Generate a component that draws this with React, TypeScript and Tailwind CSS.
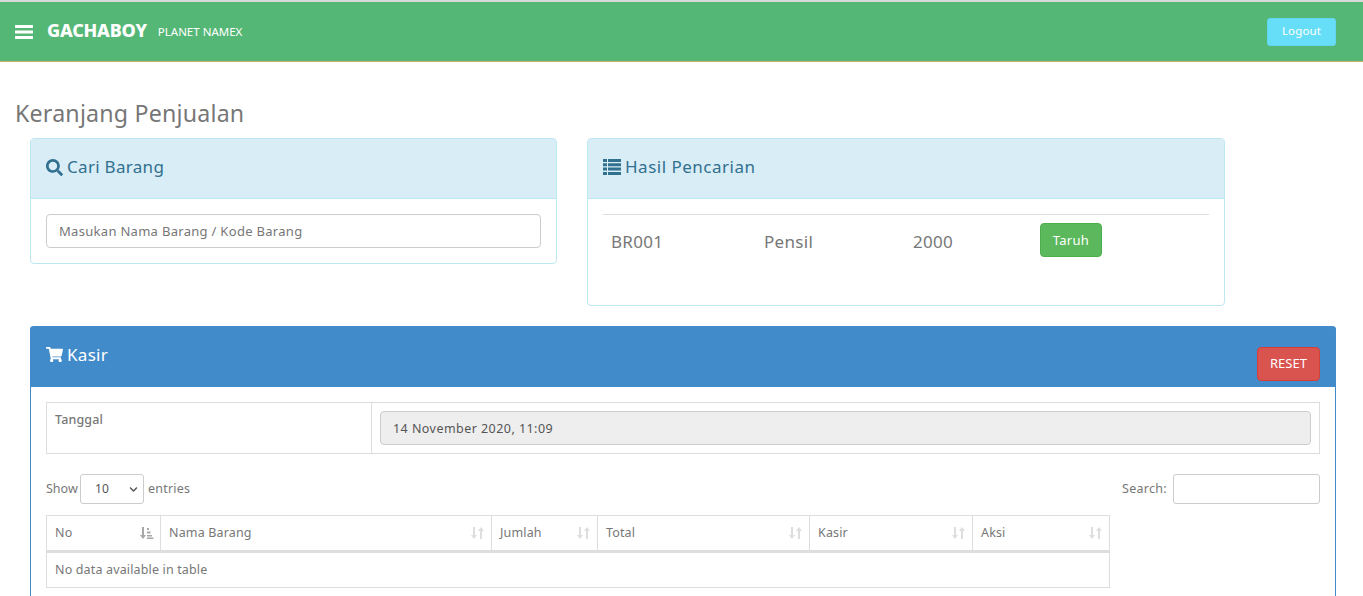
import React from 'react';
import { FaSearch, FaShoppingCart, FaChevronDown } from 'react-icons/fa';

const font = { fontFamily: '"Noto Sans", sans-serif' };

const SortIcon = ({ active = false }: { active?: boolean }) => (
  <svg width="14" height="14" viewBox="0 0 14 14" className={active ? 'text-[#a8a8a8]' : 'text-[#dedede]'} fill="currentColor">
    <path d="M2 1h2v8h2l-3 4-3-4h2z" />
    {active ? (
      <path d="M7 2h2v2H7zM7 5.500h3.500v2H7zM7 9h5v1.500H7zM7 11.500h6.500V13H7z" />
    ) : (
      <path d="M9 13h2V5h2l-3-4-3 4h2z" />
    )}
  </svg>
);

const BarsIcon = () => (
  <svg width="18" height="14" viewBox="0 0 18 14" fill="currentColor">
    <path d="M0 0h18v3H0zM0 5.500h18v3H0zM0 11h18v3H0z" />
  </svg>
);

const ListIcon = () => (
  <svg width="18" height="16" viewBox="0 0 18 16" fill="currentColor">
    <path d="M0 0h4v3H0zM5 0h13v3H5zM0 4.300h4v3H0zM5 4.300h13v3H5zM0 8.600h4v3H0zM5 8.600h13v3H5zM0 13h4v3H0zM5 13h13v3H5z" />
  </svg>
);

const columns = [
  { label: 'No', width: 'w-[113px]', active: true },
  { label: 'Nama Barang', width: 'w-[331px]' },
  { label: 'Jumlah', width: 'w-[106px]' },
  { label: 'Total', width: 'w-[212px]' },
  { label: 'Kasir', width: 'w-[163px]' },
  { label: 'Aksi', width: 'w-[137px]' },
];

export default function App() {
  return (
    <div className="h-[596px] overflow-hidden bg-white text-[#777] text-[12.500px] tracking-[0.15px]" style={font}>
      <header className="flex h-[62px] items-center border-t-2 border-b border-t-[#d8d8d8] border-b-[#c9b26a] bg-[#55b776] pl-[15px] pr-[27px] text-white">
        <BarsIcon />
        <span className="ml-[14px] mb-[2px] text-[18px] font-extrabold tracking-[-0.2px]">GACHABOY</span>
        <span className="ml-[11px] text-[11.500px] tracking-normal">PLANET NAMEX</span>
        <button className="ml-auto h-[28px] w-[69px] rounded-[3px] border border-[#66d5f0] bg-[#66def7] pb-[2px] text-[11.500px]">Logout</button>
      </header>

      <main className="pt-[35px]">
        <h1 className="ml-[15px] h-[41px] text-[23.200px] leading-[32px] tracking-[0.2px] text-[#777]">Keranjang Penjualan</h1>

        <div className="ml-[30px] flex items-start gap-[30px]">
          <section className="w-[527px] rounded-[4px] border border-[#bce8f1]">
            <div className="flex h-[60px] items-center gap-[4px] border-b border-[#bce8f1] bg-[#d9edf7] pb-[3px] pl-[15px] text-[17px] tracking-[0.3px] text-[#31708f]">
              <FaSearch className="h-[17px] w-[17px]" />
              <span>Cari Barang</span>
            </div>
            <div className="p-[15px]">
              <div className="flex h-[34px] items-center rounded-[4px] border border-[#ccc] px-[12px] pt-px text-[13px] tracking-[0.3px] text-[#777]">
                Masukan Nama Barang / Kode Barang
              </div>
            </div>
          </section>

          <section className="h-[168px] w-[638px] rounded-[4px] border border-[#bce8f1]">
            <div className="flex h-[60px] items-center gap-[4px] border-b border-[#bce8f1] bg-[#d9edf7] pb-[3px] pl-[15px] text-[17px] tracking-[0.5px] text-[#31708f]">
              <ListIcon />
              <span>Hasil Pencarian</span>
            </div>
            <div className="px-[15px] pt-[15px]">
              <div className="flex h-[54px] items-start border-t border-[#ddd] pl-[8px] text-[17px] leading-[54px] tracking-[0.3px]">
                <span className="w-[153px]">BR001</span>
                <span className="w-[149px]">Pensil</span>
                <span className="w-[127px]">2000</span>
                <button className="mt-[8px] h-[34px] w-[62px] rounded-[4px] border border-[#4cae4c] bg-[#5cb85c] text-[13px] leading-[30px] text-white">Taruh</button>
              </div>
            </div>
          </section>
        </div>

        <section className="mt-[20px] ml-[30px] w-[1306px] rounded-t-[4px] border-x border-[#428bca] pb-[30px]">
          <div className="-mx-px flex h-[61px] items-start justify-between rounded-t-[4px] bg-[#428bca] pl-[16px] pr-[16px] text-white">
            <div className="mt-[16px] flex items-center gap-[4px] text-[17px] tracking-[0.3px]">
              <FaShoppingCart className="h-[17px] w-[17px]" />
              <span>Kasir</span>
            </div>
            <button className="mt-[21px] h-[34px] w-[63px] rounded-[4px] border border-[#d43f3a] bg-[#d9534f] text-[13px] tracking-normal text-white">RESET</button>
          </div>

          <div className="px-[15px] pt-[15px]">
            <div className="flex h-[52px] border border-[#ddd]">
              <div className="w-[325px] border-r border-[#ddd] pl-[8px] pt-[8px] font-medium">Tanggal</div>
              <div className="flex-1 px-[8px] pt-[8px]">
                <div className="flex h-[34px] items-center rounded-[4px] border border-[#ccc] bg-[#eee] pl-[12px] tracking-[0.45px] text-[#555]">
                  <span className="mt-[2px]">14 November 2020, 11:09</span>
                </div>
              </div>
            </div>

            <div className="mt-[20px] flex h-[30px] items-center justify-between">
              <div className="flex items-center gap-[4px]">
                <span className="w-[30px] tracking-normal">Show</span>
                <div className="flex h-[30px] w-[64px] items-center justify-between rounded-[3px] border border-[#ccc] pl-[14px] pr-[5px] text-[12px] text-[#555]">
                  10
                  <FaChevronDown className="h-[9px] w-[9px]" />
                </div>
                <span className="tracking-[0.2px]">entries</span>
              </div>
              <div className="flex items-center gap-[6px]">
                <span className="tracking-[0.3px]">Search:</span>
                <div className="h-[30px] w-[147px] rounded-[3px] border border-[#ccc]" />
              </div>
            </div>

            <div className="mt-[11px] w-[1064px] border-x border-b border-[#ddd]">
              <div className="flex h-[38px] border-t border-b-[3px] border-[#ddd]">
                {columns.map((c, i) => (
                  <div key={c.label} className={`${c.width} flex items-center justify-between pl-[8px] pr-[6px] ${i > 0 ? 'border-l border-[#ddd]' : ''}`}>
                    <span>{c.label}</span>
                    <SortIcon active={c.active} />
                  </div>
                ))}
              </div>
              <div className="flex h-[34px] items-center pl-[8px]">No data available in table</div>
            </div>
          </div>
        </section>
      </main>
    </div>
  );
}
